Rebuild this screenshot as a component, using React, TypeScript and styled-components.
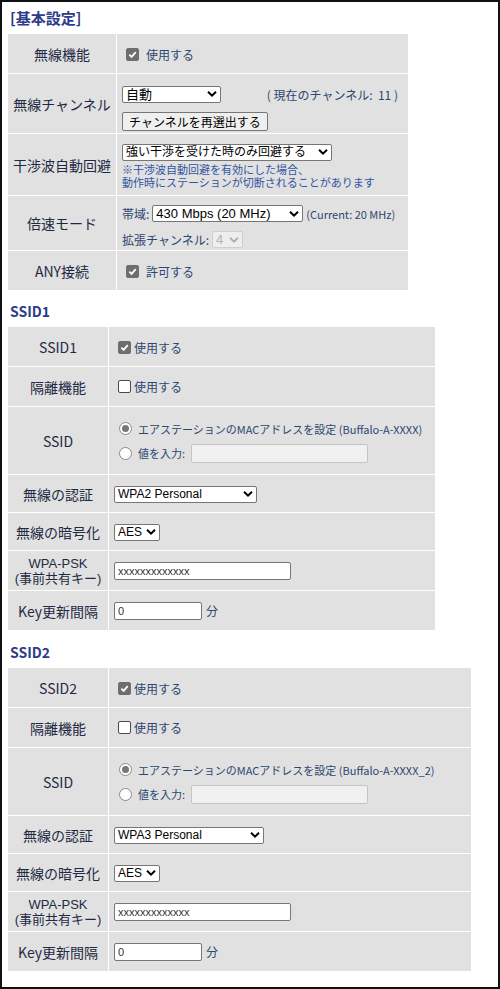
import styled, { createGlobalStyle } from "styled-components";

const GlobalStyle = createGlobalStyle`
  html, body {
    margin: 0;
    padding: 0;
    background: #ffffff;
  }
  body {
    font-family: "Noto Sans CJK JP", "Noto Sans", sans-serif;
  }
`;

const Frame = styled.div`
  width: 500px;
  height: 989px;
  box-sizing: border-box;
  border: 2px solid #111;
  padding: 0 0 0 5px;
  background: #ffffff;
  overflow: hidden;
`;

const SectionTitle = styled.h2<{ $top: number; $bottom: number; $size?: number }>`
  margin: 0;
  padding: ${(p) => p.$top}px 0 ${(p) => p.$bottom}px 3px;
  font-size: ${(p) => p.$size ?? 14}px;
  line-height: 18px;
  font-weight: bold;
  color: #2e3b8c;
`;

const SettingsTable = styled.table<{ $width: number }>`
  width: ${(p) => p.$width}px;
  border-collapse: separate;
  border-spacing: 1px;
  table-layout: fixed;
`;

const LabelCell = styled.th<{ $width: number; $h: number; $compact?: boolean }>`
  width: ${(p) => p.$width}px;
  height: ${(p) => p.$h}px;
  box-sizing: border-box;
  padding: 0 2px;
  background: #e1e1e1;
  color: #1e2a44;
  font-family: ${(p) => (p.$compact ? '"Liberation Sans", "Noto Sans CJK JP", sans-serif' : '"Noto Sans CJK JP", sans-serif')};
  font-size: ${(p) => (p.$compact ? 13 : 14)}px;
  line-height: ${(p) => (p.$compact ? 15 : 16)}px;
  font-weight: normal;
  text-align: center;
  vertical-align: middle;
  white-space: nowrap;
`;

const ValueCell = styled.td<{ $padTop?: number }>`
  background: #e1e1e1;
  padding: ${(p) => p.$padTop ?? 0}px 0 0 5px;
  vertical-align: middle;
  color: #2c4670;
  font-size: 12px;
  white-space: nowrap;
`;

const Stack = styled.div<{ $gap: number }>`
  display: flex;
  flex-direction: column;
  align-items: flex-start;
  gap: ${(p) => p.$gap}px;
`;

const Line = styled.div<{ $gap?: number }>`
  display: flex;
  align-items: center;
  gap: ${(p) => p.$gap ?? 4}px;
  width: 100%;
`;

const Spread = styled(Line)`
  justify-content: space-between;
  padding-right: 10px;
  box-sizing: border-box;
`;

const CheckRow = styled.label<{ $gap: number; $indent: number }>`
  display: inline-flex;
  align-items: center;
  gap: ${(p) => p.$gap}px;
  padding-left: ${(p) => p.$indent}px;
  font-size: 12px;
  color: #2c4670;
`;

const Box = styled.span<{ $checked: boolean }>`
  display: inline-flex;
  align-items: center;
  justify-content: center;
  width: 13px;
  height: 13px;
  box-sizing: border-box;
  border-radius: 2px;
  border: 1px solid ${(p) => (p.$checked ? "#6e6e6e" : "#4a4a4a")};
  background: ${(p) => (p.$checked ? "#6e6e6e" : "#ffffff")};
`;

const RadioDot = styled.span<{ $checked: boolean }>`
  display: inline-flex;
  align-items: center;
  justify-content: center;
  width: 13px;
  height: 13px;
  box-sizing: border-box;
  border-radius: 50%;
  border: 1px solid #8a8a8a;
  background: #ffffff;
  &::after {
    content: "";
    display: ${(p) => (p.$checked ? "block" : "none")};
    width: 7px;
    height: 7px;
    border-radius: 50%;
    background: #777;
  }
`;

const SelectWrap = styled.span`
  position: relative;
  display: inline-flex;
`;

const NativeSelect = styled.select<{ $width: number; $size?: number }>`
  appearance: none;
  -webkit-appearance: none;
  width: ${(p) => p.$width}px;
  height: 17px;
  box-sizing: border-box;
  padding: 0 14px 0 3px;
  border: 1px solid #767676;
  border-radius: 2px;
  background: #ffffff;
  color: #000;
  font-family: "Liberation Sans", "Noto Sans CJK JP", sans-serif;
  font-size: ${(p) => p.$size ?? 13}px;
  &:disabled {
    color: #a0a0a0;
    border-color: #c8c8c8;
    background: #f4f4f4;
  }
`;

const Chevron = styled.svg`
  position: absolute;
  right: 4px;
  top: 50%;
  transform: translateY(-50%);
  pointer-events: none;
`;

const Select = ({ width, size, disabled, value }: { width: number; size?: number; disabled?: boolean; value: string }) => (
  <SelectWrap>
    <NativeSelect $width={width} $size={size} disabled={disabled} defaultValue={value}>
      <option value={value}>{value}</option>
    </NativeSelect>
    <Chevron width="10" height="7" viewBox="0 0 10 7">
      <path d="M1 1.2 L5 5.2 L9 1.2" fill="none" stroke={disabled ? "#b0b0b0" : "#000"} strokeWidth="2" />
    </Chevron>
  </SelectWrap>
);

const Button = styled.button`
  height: 19px;
  box-sizing: border-box;
  padding: 0 6px;
  border: 1px solid #767676;
  border-radius: 2px;
  background: #efefef;
  color: #000;
  font-family: "Liberation Sans", "Noto Sans CJK JP", sans-serif;
  font-size: 12px;
`;

const TextInput = styled.input<{ $width: number }>`
  width: ${(p) => p.$width}px;
  height: 18px;
  box-sizing: border-box;
  padding: 0 3px;
  border: 1px solid #767676;
  border-radius: 2px;
  background: #ffffff;
  color: #333;
  font-family: "Liberation Sans", "Noto Sans CJK JP", sans-serif;
  font-size: 11px;
  &:disabled {
    background: #f0f0f0;
    border-color: #c4c4c4;
    height: 19px;
  }
`;

const Note = styled.div`
  color: #2f56a0;
  font-family: "Liberation Sans", "Noto Sans CJK JP", sans-serif;
  font-size: 11px;
  line-height: 13px;
`;

const Small = styled.span`
  font-size: 11px;
  color: #2c4670;
`;

const Check = ({ checked, text, gap, indent }: { checked: boolean; text: string; gap: number; indent: number }) => (
  <CheckRow $gap={gap} $indent={indent}>
    <Box $checked={checked}>
      {checked && (
        <svg width="9" height="9" viewBox="0 0 10 10">
          <path d="M1.5 5.2 L4 7.6 L8.6 2.4" fill="none" stroke="#fff" strokeWidth="2" />
        </svg>
      )}
    </Box>
    {text}
  </CheckRow>
);

const BasicTable = () => (
  <SettingsTable $width={402}>
    <tbody>
      <tr>
        <LabelCell $width={108} $h={39}>無線機能</LabelCell>
        <ValueCell>
          <Check checked text="使用する" gap={7} indent={4} />
        </ValueCell>
      </tr>
      <tr>
        <LabelCell $width={108} $h={59}>無線チャンネル</LabelCell>
        <ValueCell $padTop={9}>
          <Stack $gap={9}>
            <Spread>
              <Select width={99} value="自動" />
              <span>( 現在のチャンネル:&nbsp; 11 )</span>
            </Spread>
            <Button>チャンネルを再選出する</Button>
          </Stack>
        </ValueCell>
      </tr>
      <tr>
        <LabelCell $width={108} $h={61}>干渉波自動回避</LabelCell>
        <ValueCell $padTop={4}>
          <Stack $gap={3}>
            <Select width={210} size={12} value="強い干渉を受けた時のみ回避する" />
            <Note>
              ※干渉波自動回避を有効にした場合、
              <br />
              動作時にステーションが切断されることがあります
            </Note>
          </Stack>
        </ValueCell>
      </tr>
      <tr>
        <LabelCell $width={108} $h={54}>倍速モード</LabelCell>
        <ValueCell $padTop={7}>
          <Stack $gap={9}>
            <Line $gap={3}>
              <span>帯域:</span>
              <Select width={151} value="430 Mbps (20 MHz)" />
              <Small>(Current: 20 MHz)</Small>
            </Line>
            <Line $gap={3}>
              <span>拡張チャンネル:</span>
              <Select width={31} disabled value="4" />
            </Line>
          </Stack>
        </ValueCell>
      </tr>
      <tr>
        <LabelCell $width={108} $h={39}>ANY接続</LabelCell>
        <ValueCell>
          <Check checked text="許可する" gap={7} indent={4} />
        </ValueCell>
      </tr>
    </tbody>
  </SettingsTable>
);

const SsidTable = ({ name, width, auth, authWidth, suffix }: { name: string; width: number; auth: string; authWidth: number; suffix: string }) => (
  <SettingsTable $width={width}>
    <tbody>
      <tr>
        <LabelCell $width={100} $h={39}>{name}</LabelCell>
        <ValueCell>
          <Check checked text="使用する" gap={3} indent={4} />
        </ValueCell>
      </tr>
      <tr>
        <LabelCell $width={100} $h={39}>隔離機能</LabelCell>
        <ValueCell>
          <Check checked={false} text="使用する" gap={3} indent={4} />
        </ValueCell>
      </tr>
      <tr>
        <LabelCell $width={100} $h={67}>SSID</LabelCell>
        <ValueCell $padTop={2}>
          <Stack $gap={7}>
            <CheckRow $gap={6} $indent={5}>
              <RadioDot $checked />
              <Small>エアステーションのMACアドレスを設定 (Buffalo-A-XXXX{suffix})</Small>
            </CheckRow>
            <CheckRow $gap={6} $indent={5}>
              <RadioDot $checked={false} />
              <Small>値を入力:</Small>
              <TextInput $width={177} disabled />
            </CheckRow>
          </Stack>
        </ValueCell>
      </tr>
      <tr>
        <LabelCell $width={100} $h={37}>無線の認証</LabelCell>
        <ValueCell>
          <Select width={authWidth} size={12} value={auth} />
        </ValueCell>
      </tr>
      <tr>
        <LabelCell $width={100} $h={37}>無線の暗号化</LabelCell>
        <ValueCell>
          <Select width={46} size={12} value="AES" />
        </ValueCell>
      </tr>
      <tr>
        <LabelCell $width={100} $h={39} $compact>
          WPA-PSK
          <br />
          (事前共有キー)
        </LabelCell>
        <ValueCell>
          <TextInput $width={177} defaultValue="xxxxxxxxxxxxx" />
        </ValueCell>
      </tr>
      <tr>
        <LabelCell $width={100} $h={39}>Key更新間隔</LabelCell>
        <ValueCell>
          <Line $gap={4}>
            <TextInput $width={88} defaultValue="0" />
            <span>分</span>
          </Line>
        </ValueCell>
      </tr>
    </tbody>
  </SettingsTable>
);

const App = () => (
  <>
    <GlobalStyle />
    <Frame>
      <SectionTitle $top={7} $bottom={6} $size={15}>[基本設定]</SectionTitle>
      <BasicTable />
      <SectionTitle $top={11} $bottom={6}>SSID1</SectionTitle>
      <SsidTable name="SSID1" width={429} auth="WPA2 Personal" authWidth={143} suffix="" />
      <SectionTitle $top={12} $bottom={6}>SSID2</SectionTitle>
      <SsidTable name="SSID2" width={465} auth="WPA3 Personal" authWidth={150} suffix="_2" />
    </Frame>
  </>
);

export default App;
